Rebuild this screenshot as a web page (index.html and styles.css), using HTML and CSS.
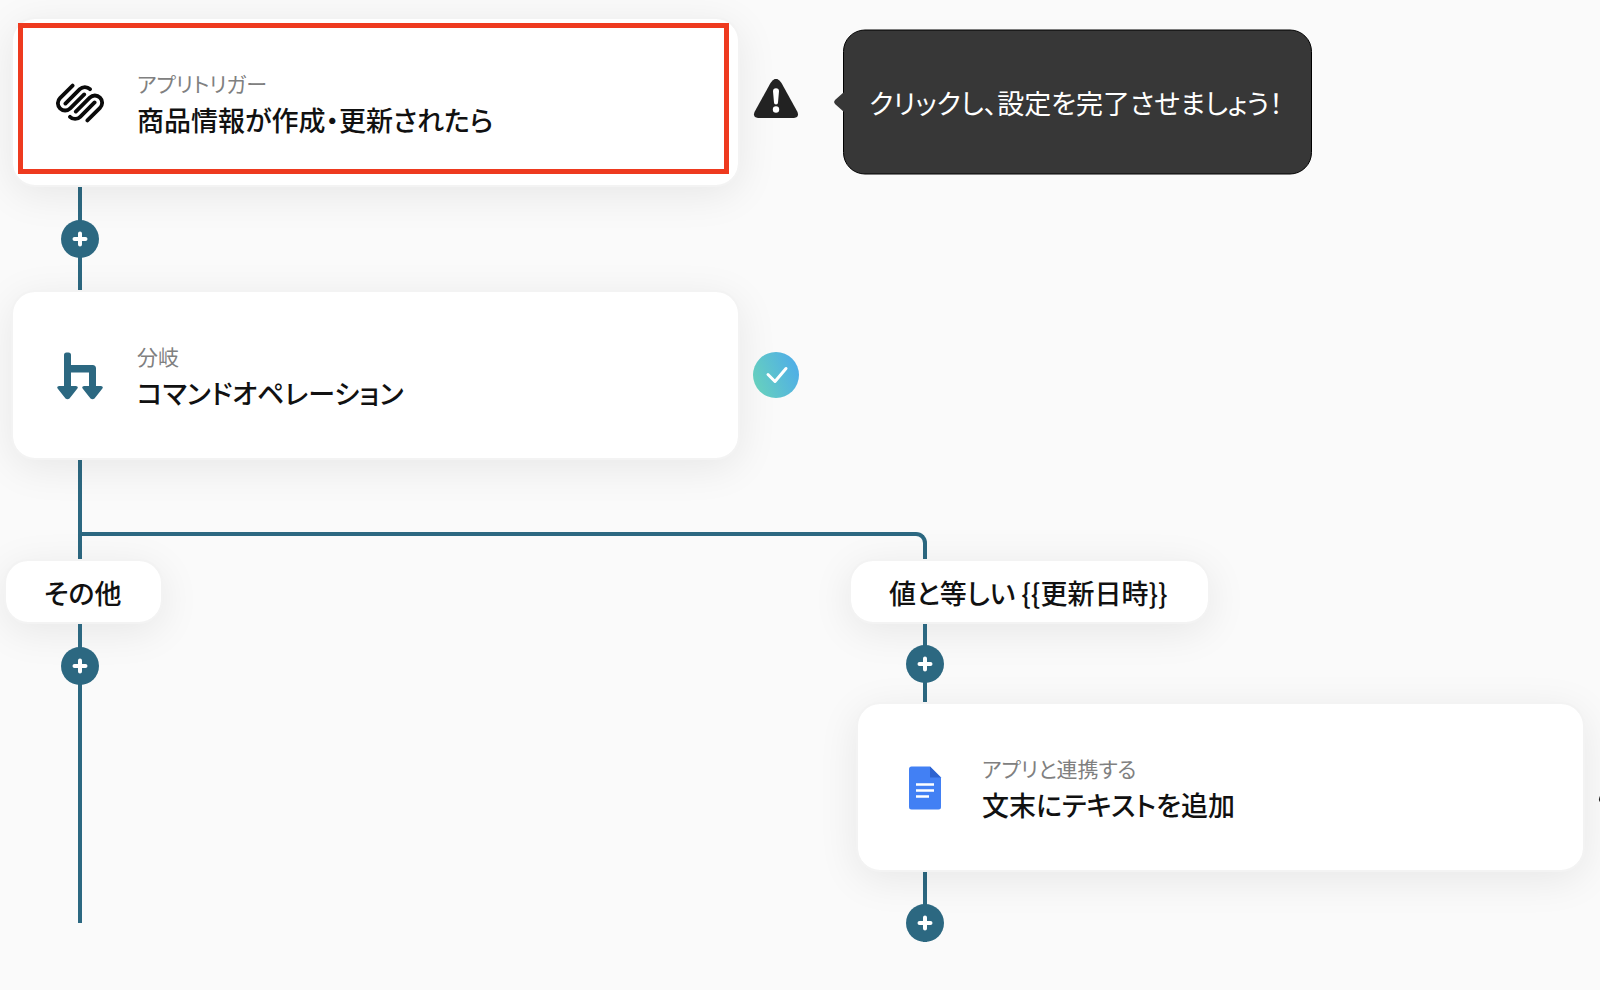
FILE: index.html
```html
<!DOCTYPE html>
<html lang="ja">
<head>
<meta charset="utf-8">
<meta name="viewport" content="width=device-width, initial-scale=1">
<title>フロー</title>
<link rel="stylesheet" href="styles.css">
</head>
<body>
<main class="flow">
  <section class="lane">
    <div class="step">
      <article class="card">
        <svg class="card-icon" viewBox="0 0 24 24" fill="none" stroke="#0b0b0b" stroke-width="1.900" stroke-linecap="round" aria-hidden="true"><path d="M8.300 3.300L2 9.600A3.600 3.600 0 0 0 7.100 14.700L14.100 7.700M4.700 12.300L11.900 5.100A3.600 3.600 0 0 1 17 5.100M15.700 20.700L22 14.400A3.600 3.600 0 0 0 16.900 9.300L9.900 16.300M19.300 11.700L12.100 18.900A3.600 3.600 0 0 1 7 18.900"/></svg>
        <div class="card-text">
          <p class="card-label">アプリトリガー</p>
          <h2 class="card-title">商品情報が作成・更新されたら</h2>
        </div>
        <span class="highlight"></span>
      </article>
      <div class="status">
        <svg class="status-icon" viewBox="0 2 46 46" role="img" aria-label="未設定"><path d="M17.500 6Q23-2.500 28.500 6L44.500 35Q46.500 40.500 41 41H5Q-.5 40.500 1.500 35Z" fill="#222"/><path d="M20 14.300a3 3 0 0 1 6 0l-1 11.200a2 2 0 0 1-4 0z" fill="#fff"/><circle cx="23" cy="32.500" r="3.200" fill="#fff"/></svg>
        <div class="tooltip" role="tooltip">クリックし、設定を完了させましょう！</div>
      </div>
    </div>
    <div class="connector connector-wide">
      <button class="add" type="button" aria-label="追加"><svg viewBox="0 0 38 38"><path d="M19 13.500v11M13.500 19h11"/></svg></button>
    </div>
    <div class="step">
      <article class="card">
        <svg class="card-icon" viewBox="0 0 48 48" fill="#2c6881" aria-hidden="true"><path d="M8 3a2.500 2.500 0 0 1 2.500-2.500h2A2.500 2.500 0 0 1 15 3v10h21.500a3.500 3.500 0 0 1 3.500 3.500V34h5q3 .5 1 3L38.500 46.500q-2 1.500-4 0L27 37q-2-2.500 1-3h5V20.500H15V34h5q3 .5 1 3l-7.500 9.500q-2 1.500-4 0L2 37q-2-2.500 1-3h5z"/></svg>
        <div class="card-text">
          <p class="card-label">分岐</p>
          <h2 class="card-title">コマンドオペレーション</h2>
        </div>
      </article>
      <div class="status">
        <svg class="status-icon" viewBox="0 0 46 46" role="img" aria-label="設定済み"><defs><linearGradient id="done" x1="0" y1=".7" x2="1" y2=".3"><stop offset="0" stop-color="#67d1bd"/><stop offset="1" stop-color="#4fade8"/></linearGradient></defs><circle cx="23" cy="23" r="23" fill="url(#done)"/><path d="M15 22.500l7 7L33 16.500" fill="none" stroke="#fff" stroke-width="3" stroke-linecap="round" stroke-linejoin="round"/></svg>
      </div>
    </div>
    <div class="connector trunk"></div>
  </section>

  <section class="branches">
    <div class="lane">
      <div class="fork fork-start"></div>
      <h3 class="condition">その他</h3>
      <div class="connector connector-open">
        <button class="add" type="button" aria-label="追加"><svg viewBox="0 0 38 38"><path d="M19 13.500v11M13.500 19h11"/></svg></button>
      </div>
    </div>
    <div class="lane">
      <div class="fork fork-end"></div>
      <h3 class="condition">値と等しい {{更新日時}}</h3>
      <div class="connector">
        <button class="add" type="button" aria-label="追加"><svg viewBox="0 0 38 38"><path d="M19 13.500v11M13.500 19h11"/></svg></button>
      </div>
      <div class="step step-edge">
        <article class="card">
          <svg class="card-icon" viewBox="0 0 48 48" aria-hidden="true"><path d="M10.500 2.500H29L40 13.500V43a2.500 2.500 0 0 1-2.500 2.500h-27A2.500 2.500 0 0 1 8 43V5a2.500 2.500 0 0 1 2.500-2.500z" fill="#4280f4"/><path d="M29 2.500l11 11H29z" fill="#2c62d0"/><path d="M15 20.500h18M15 26.500h18M15 32.500h13" stroke="#fff" stroke-width="2.500"/></svg>
          <div class="card-text">
            <p class="card-label">アプリと連携する</p>
            <h2 class="card-title">文末にテキストを追加</h2>
          </div>
        </article>
        <div class="status">
          <svg class="status-icon" viewBox="0 2 46 46" role="img" aria-label="未設定"><path d="M17.500 6Q23-2.500 28.500 6L44.500 35Q46.500 40.500 41 41H5Q-.5 40.500 1.500 35Z" fill="#222"/><path d="M20 14.300a3 3 0 0 1 6 0l-1 11.200a2 2 0 0 1-4 0z" fill="#fff"/><circle cx="23" cy="32.500" r="3.200" fill="#fff"/></svg>
        </div>
      </div>
      <div class="connector connector-end">
        <button class="add" type="button" aria-label="追加"><svg viewBox="0 0 38 38"><path d="M19 13.500v11M13.500 19h11"/></svg></button>
      </div>
    </div>
  </section>
</main>
</body>
</html>
```
FILE: styles.css
```css
:root {
  --teal: #2c6881;
  --edge: #f3f3f3;
  --shadow: 0 8px 40px rgba(0, 0, 0, 0.08);
}

* {
  box-sizing: border-box;
}

body {
  margin: 0;
  min-height: 100vh;
  overflow-x: hidden;
  background: #fafafa;
  color: #111;
  font-family: "Noto Sans CJK JP", "Noto Sans", sans-serif;
  font-feature-settings: "palt";
}

h2,
h3,
p {
  margin: 0;
}

.flow {
  padding: 17px 0 48px 11px;
  overflow-x: clip;
}

.flow > .lane,
.branches {
  display: grid;
}

.flow > .lane {
  width: calc(845 / 1589 * 100%);
}

.branches {
  grid-template-columns: 845fr 744fr;
}

.lane {
  min-width: 0;
}

.step {
  display: flex;
  align-items: center;
  gap: 13px;
  padding-right: 57px;
}

.step-edge {
  padding-right: 0;
  margin-right: -44px;
}

.card {
  position: relative;
  flex: 1;
  display: flex;
  align-items: center;
  gap: 33px;
  min-width: 0;
  padding: 48px 43px 47px;
  border: 2px solid var(--edge);
  border-radius: 24px;
  background: #fff;
  background-clip: padding-box;
  box-shadow: var(--shadow);
}

.card-icon {
  flex: none;
  width: 48px;
  height: 48px;
}

.card-label {
  margin-bottom: 3px;
  color: #808080;
  font-size: 21px;
  font-weight: 400;
  line-height: 32px;
}

.card-title {
  font-size: 27px;
  font-weight: 500;
  line-height: 36px;
}

.highlight {
  position: absolute;
  inset: 4px 9px 11px 5px;
  border: 5px solid #ee3a1f;
}

.status {
  position: relative;
  flex: none;
  z-index: 1;
}

.status-icon {
  display: block;
  width: 46px;
  height: 46px;
}

.tooltip {
  position: absolute;
  top: 50%;
  left: calc(100% + 44px);
  transform: translateY(-50%);
  padding: 52px 28px 52px 25px;
  border: 1px solid #000;
  border-radius: 22px;
  background: #373737;
  color: #fff;
  font-size: 27px;
  font-weight: 400;
  line-height: 39px;
  white-space: nowrap;
}

.tooltip::before {
  content: "";
  position: absolute;
  top: calc(50% - 10px);
  left: -10px;
  width: 10px;
  height: 20px;
  background: #373737;
  clip-path: polygon(100% 0, 10% 40%, 0 50%, 10% 60%, 100% 100%);
}

.connector {
  display: flex;
  justify-content: center;
  width: 38px;
  margin-left: 50px;
  padding: 21px 0 19px;
  background: linear-gradient(var(--teal), var(--teal)) center / 4px 100% no-repeat;
}

.connector-wide {
  padding: 33px 0 32px;
}

.connector-open {
  padding: 23px 0 238px;
}

.connector-end {
  padding: 32px 0 0;
}

.trunk {
  height: 72px;
  padding: 0;
}

.add {
  position: relative;
  z-index: 1;
  width: 38px;
  height: 38px;
  padding: 0;
  border: 0;
  border-radius: 50%;
  background: var(--teal);
  cursor: pointer;
}

.add svg {
  display: block;
  fill: none;
  stroke: #fff;
  stroke-width: 4;
  stroke-linecap: round;
}

.fork {
  height: 27px;
  border-top: 4px solid var(--teal);
}

.fork-start {
  margin-left: 67px;
  border-left: 4px solid var(--teal);
}

.fork-end {
  width: 71px;
  border-right: 4px solid var(--teal);
  border-top-right-radius: 11px;
}

.condition {
  width: max-content;
  margin-left: -7px;
  padding: 12px 40px 10px 38px;
  border: 2px solid var(--edge);
  border-radius: 24px;
  background: #fff;
  background-clip: padding-box;
  box-shadow: var(--shadow);
  font-size: 27px;
  font-weight: 500;
  line-height: 39px;
}
```
